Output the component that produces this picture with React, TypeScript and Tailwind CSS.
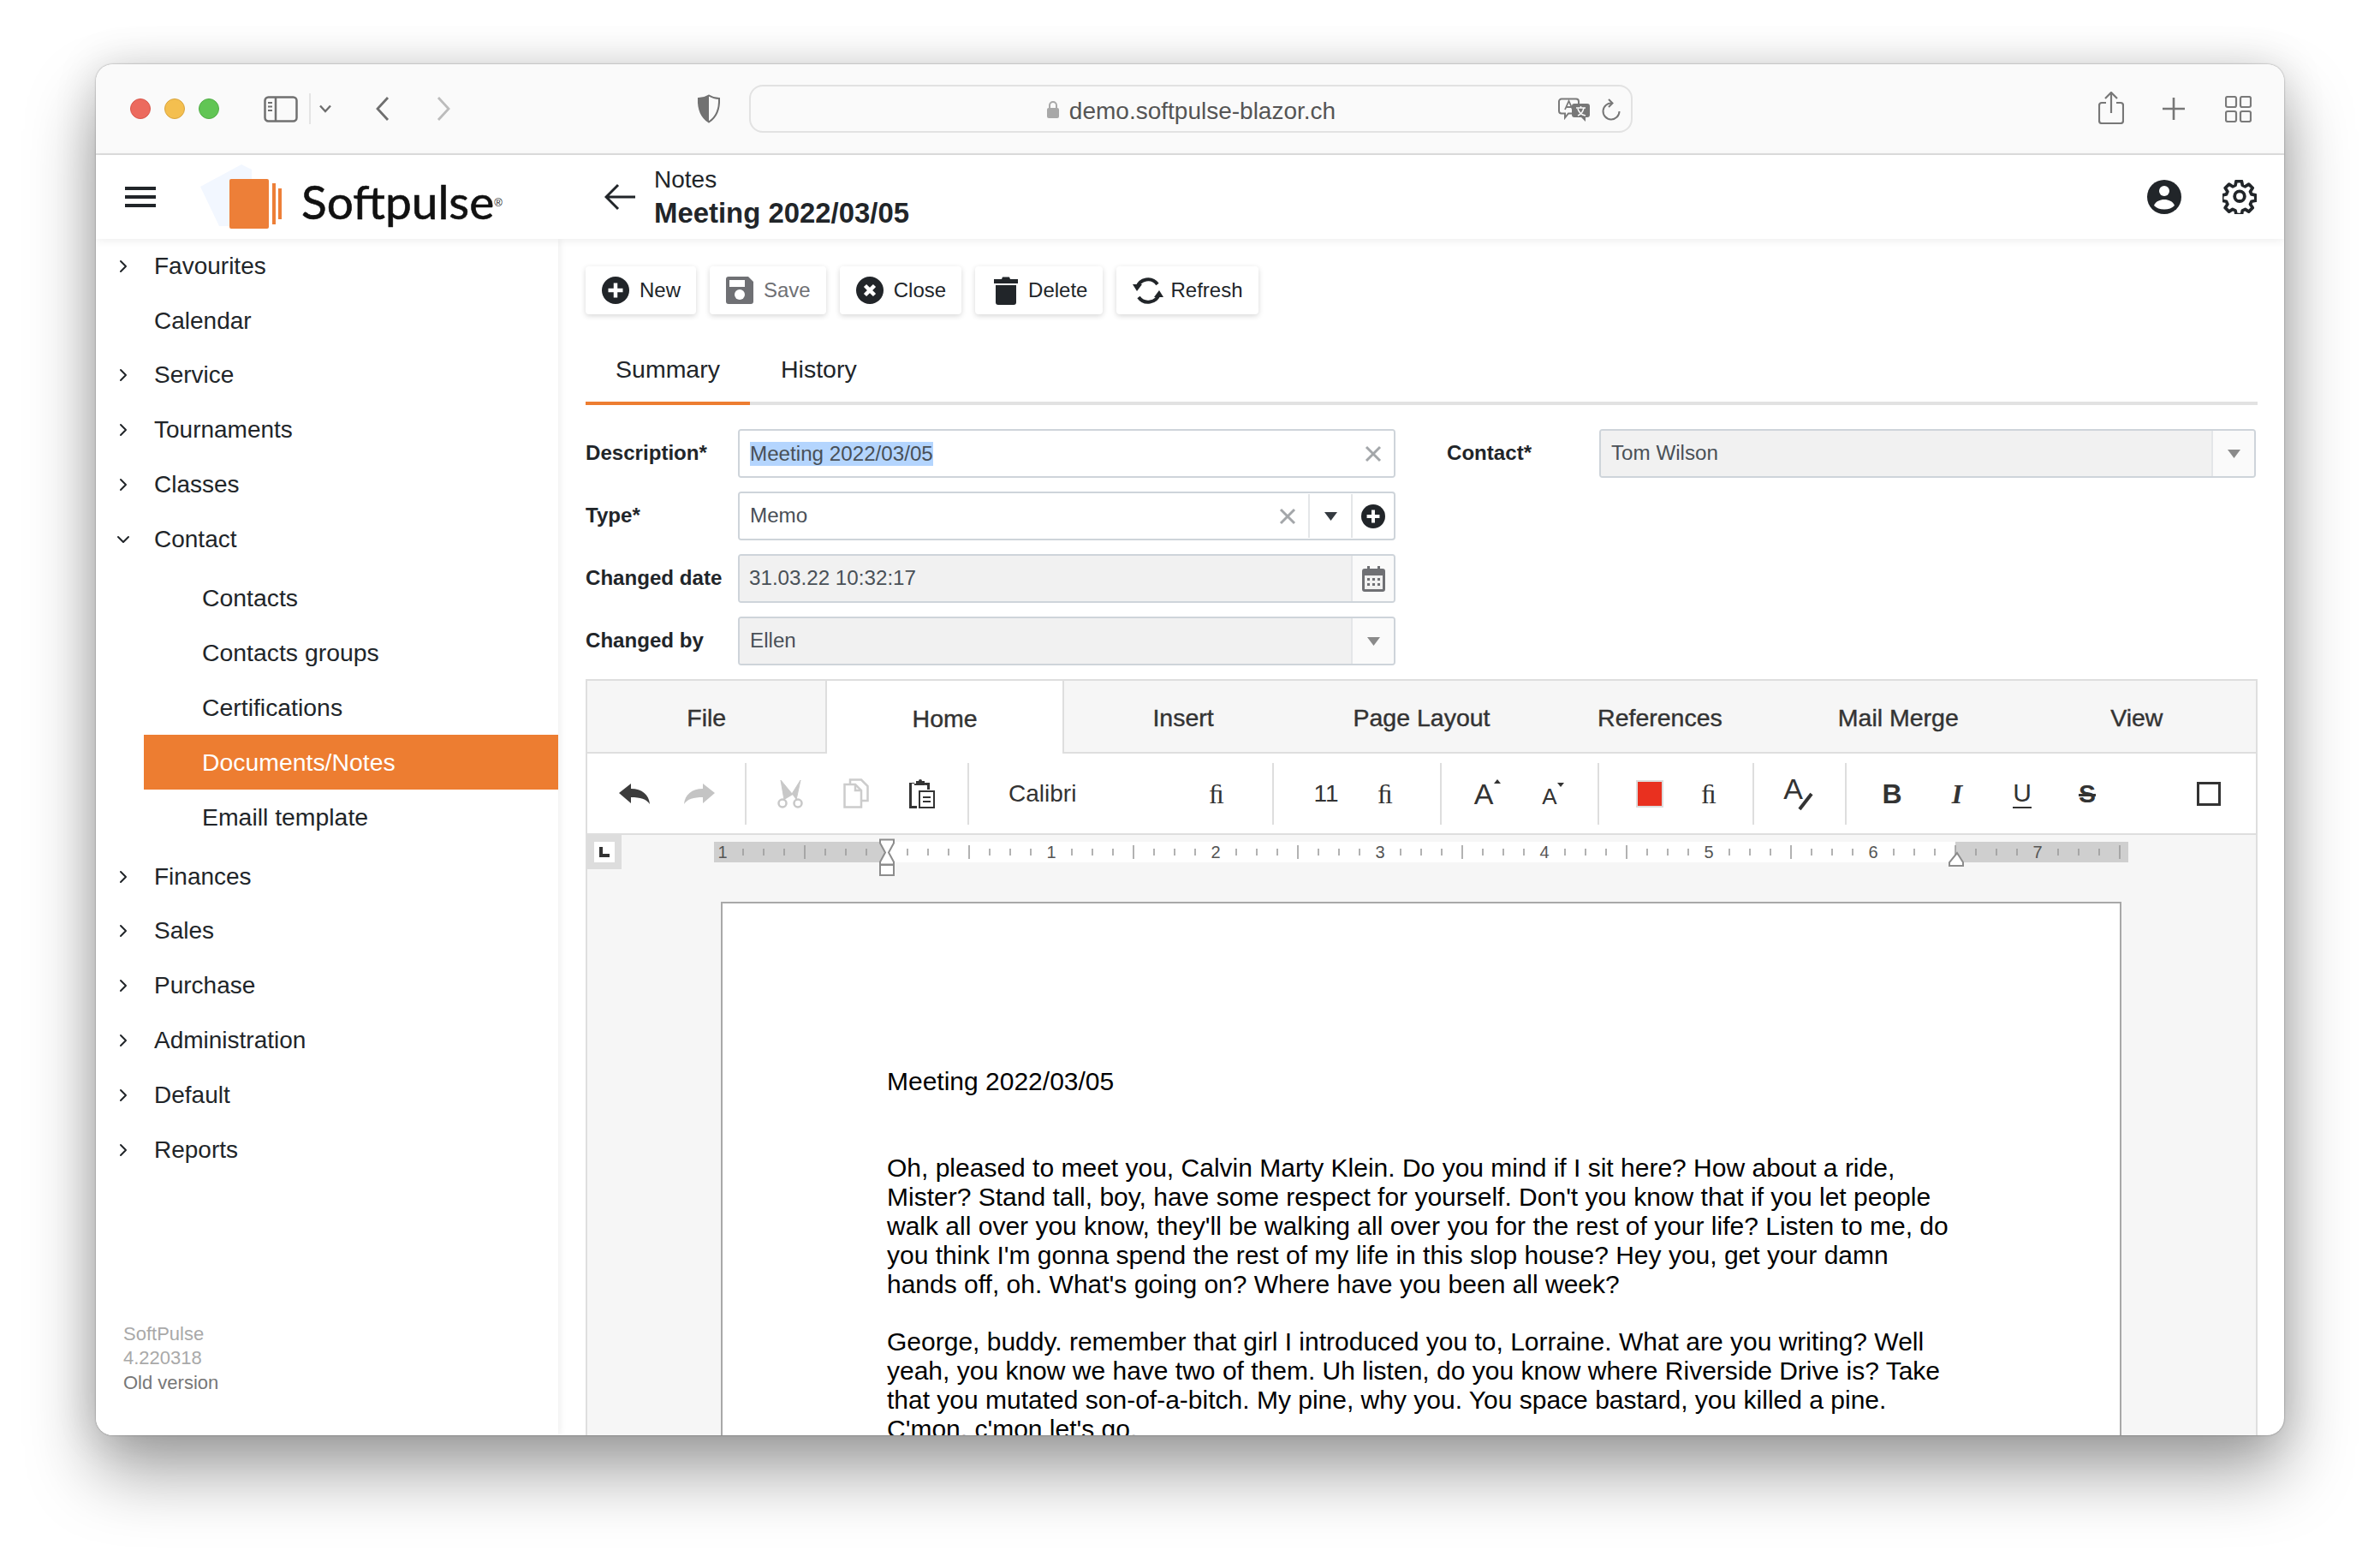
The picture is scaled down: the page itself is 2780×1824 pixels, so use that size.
import { ChevronDown, ChevronRight } from 'lucide-react'

const sans = "font-['Liberation_Sans',Arial,sans-serif]"

const navTop = [
  { label: 'Favourites', arrow: true },
  { label: 'Calendar', arrow: false },
  { label: 'Service', arrow: true },
  { label: 'Tournaments', arrow: true },
  { label: 'Classes', arrow: true },
]

const navSub = ['Contacts', 'Contacts groups', 'Certifications', 'Documents/Notes', 'Emaill template']

const navBottom = ['Finances', 'Sales', 'Purchase', 'Administration', 'Default', 'Reports']

const ribbonTabs = ['File', 'Home', 'Insert', 'Page Layout', 'References', 'Mail Merge', 'View']

const docFirst = [
  'Oh, pleased to meet you, Calvin Marty Klein. Do you mind if I sit here? How about a ride,',
  "Mister? Stand tall, boy, have some respect for yourself. Don't you know that if you let people",
  "walk all over you know, they'll be walking all over you for the rest of your life? Listen to me, do",
  "you think I'm gonna spend the rest of my life in this slop house? Hey you, get your damn",
  "hands off, oh. What's going on? Where have you been all week?",
]

const docSecond = [
  'George, buddy. remember that girl I introduced you to, Lorraine. What are you writing? Well',
  'yeah, you know we have two of them. Uh listen, do you know where Riverside Drive is? Take',
  'that you mutated son-of-a-bitch. My pine, why you. You space bastard, you killed a pine.',
  "C'mon, c'mon let's go.",
]

function SafariBar() {
  return (
    <div className="flex h-[106px] shrink-0 items-center border-b-2 border-[#dedede] bg-[#fafafa]">
      <div className="ml-[40px] flex gap-[16px]">
        <div className="h-[24px] w-[24px] rounded-full border border-[#d9574c] bg-[#ec6a5e]" />
        <div className="h-[24px] w-[24px] rounded-full border border-[#d9a53f] bg-[#f4bf4f]" />
        <div className="h-[24px] w-[24px] rounded-full border border-[#52ad47] bg-[#61c554]" />
      </div>
      <svg className="ml-[52px]" width="40" height="31" viewBox="0 0 40 31" fill="none" stroke="#707070" strokeWidth="2.5">
        <rect x="1.5" y="1.5" width="37" height="28" rx="4" />
        <path d="M14 2v27" />
        <path d="M5 8h5M5 12.5h5M5 17h5" strokeWidth="2" />
      </svg>
      <div className="ml-[13px] h-[36px] w-[2px] bg-[#e4e4e4]" />
      <svg className="ml-[10px]" width="14" height="10" viewBox="0 0 14 10" fill="none" stroke="#6e6e6e" strokeWidth="2.4">
        <path d="M1 1.5l6 6.5 6-6.5" />
      </svg>
      <svg className="ml-[52px]" width="16" height="30" viewBox="0 0 16 30" fill="none" stroke="#6e6e6e" strokeWidth="2.8">
        <path d="M14 2L2 15l12 13" />
      </svg>
      <svg className="ml-[55px]" width="16" height="30" viewBox="0 0 16 30" fill="none" stroke="#bcbcbc" strokeWidth="2.8">
        <path d="M2 2l12 13L2 28" />
      </svg>
      <svg className="ml-[288px]" width="28" height="34" viewBox="0 0 28 34">
        <path d="M14 1.5c4 2.5 8 3.5 12 3.5 .5 11-2 21-12 27.5C4 26 1.500 16 2 5c4 0 8-1 12-3.500z" fill="#fafafa" stroke="#727272" strokeWidth="2" />
        <path d="M14 1.500C10 4 6 5 2 5c-.5 11 2 21 12 27.500z" fill="#727272" />
      </svg>
      <div className="relative ml-[33px] flex h-[56px] w-[1032px] items-center justify-center rounded-[16px] border-2 border-[#e2e2e2] bg-[#fafafa]">
        <svg className="mr-[11px] mt-[2px]" width="16" height="22" viewBox="0 0 16 22">
          <path d="M4 10V6a4 4 0 018 0v4" fill="none" stroke="#a8a8a8" strokeWidth="2" />
          <rect x="1" y="9" width="14" height="12" rx="2" fill="#a8a8a8" />
        </svg>
        <span className={`${sans} mt-[5px] text-[28px] leading-none text-[#555555]`}>demo.softpulse-blazor.ch</span>
        <svg className="absolute left-[943px] top-[13px]" width="38" height="29" viewBox="0 0 38 29">
          <path d="M4 1.500h17a3 3 0 013 3v11a3 3 0 01-3 3H12l-4 5v-5H4a3 3 0 01-3-3v-11a3 3 0 013-3z" fill="#fafafa" stroke="#7a7a7a" strokeWidth="2" />
          <path d="M8 14l4.500-10L17 14M9.500 11h6" fill="none" stroke="#7a7a7a" strokeWidth="1.800" />
          <path d="M19 7h15a3 3 0 013 3v10a3 3 0 01-3 3h-2v5l-5-5h-8a3 3 0 01-3-3V10a3 3 0 013-3z" fill="#777777" />
          <path d="M21 12h11M26.500 10v2M23 21c4-1.500 6-4.500 7-9M23 13c1 4 4 7 9 8" fill="none" stroke="#fafafa" strokeWidth="1.500" />
        </svg>
        <svg className="absolute right-[11px] top-[14px]" width="24" height="26" viewBox="0 0 24 26" fill="none" stroke="#777777" strokeWidth="2">
          <path d="M13 5.500A9.500 9.500 0 1021.500 15" />
          <path d="M9 1l4.500 4.500L9 10" />
        </svg>
      </div>
      <svg className="-mt-[2px] ml-[544px]" width="30" height="38" viewBox="0 0 30 38" fill="none" stroke="#777777" strokeWidth="2.200">
        <path d="M9 13H4a3 3 0 00-3 3v18a3 3 0 003 3h22a3 3 0 003-3V16a3 3 0 00-3-3h-5" />
        <path d="M15 25V2M8 8l7-7 7 7" />
      </svg>
      <svg className="ml-[44px]" width="28" height="28" viewBox="0 0 28 28" stroke="#777777" strokeWidth="2.600">
        <path d="M14 1v26M1 14h26" />
      </svg>
      <svg className="ml-[46px]" width="31" height="31" viewBox="0 0 31 31" fill="none" stroke="#7a7a7a" strokeWidth="2.200">
        <rect x="1" y="1" width="12" height="12" rx="2" />
        <rect x="18" y="1" width="12" height="12" rx="2" />
        <rect x="1" y="18" width="12" height="12" rx="2" />
        <rect x="18" y="18" width="12" height="12" rx="2" />
      </svg>
    </div>
  )
}

function AppHeader() {
  return (
    <div className="relative z-10 flex h-[98px] shrink-0 items-center bg-white shadow-[0_2px_10px_rgba(0,0,0,0.07)]">
      <div className="ml-[34px] flex h-[24px] w-[36px] flex-col justify-between">
        <div className="h-[4px] bg-[#212529]" />
        <div className="h-[4px] bg-[#212529]" />
        <div className="h-[4px] bg-[#212529]" />
      </div>
      <svg className="ml-[52px]" width="100" height="80" viewBox="0 0 100 80">
        <path d="M0 28L48 2l12 6v66H22z" fill="#f2f7ff" />
        <rect x="34" y="19" width="46" height="58" rx="2" fill="#ed7f38" />
        <rect x="84" y="24" width="4" height="48" fill="#ed7f38" />
        <rect x="91" y="30" width="4" height="36" fill="#ed7f38" />
      </svg>
      <div className="ml-[18px] mt-[10px] flex w-[250px] items-start">
        <span className="font-['Lato',sans-serif] text-[55px] leading-none text-[#111111] [-webkit-text-stroke:0.6px_#111111]">Softpulse</span>
        <span className={`${sans} mt-[22px] text-[13px] leading-none text-[#222222]`}>®</span>
      </div>
      <svg className="ml-[104px]" width="36" height="32" viewBox="0 0 36 32" fill="none" stroke="#212529" strokeWidth="3">
        <path d="M36 16H3M16 2L2 16l14 14" />
      </svg>
      <div className={`${sans} ml-[22px] flex flex-col text-[#212529]`}>
        <span className="text-[28px] leading-[38px]">Notes</span>
        <span className="text-[32.900px] font-bold leading-[40px]">Meeting 2022/03/05</span>
      </div>
      <div className="ml-auto flex items-center">
        <svg width="40" height="40" viewBox="0 0 40 40">
          <circle cx="20" cy="20" r="20" fill="#212529" />
          <circle cx="20" cy="13" r="6" fill="white" />
          <path d="M8 30c2-5 7-7 12-7s10 2 12 7c-3 3-7 4.500-12 4.500S11 33 8 30z" fill="white" />
        </svg>
        <svg className="ml-[48px] mr-[32px]" width="40" height="40" viewBox="0 0 24 24" fill="none" stroke="#212529" strokeWidth="2.300" strokeLinejoin="round">
          <path d="M10 1.500h4l.6 3 2 .9 2.600-1.700 2.800 2.800-1.700 2.600.9 2 3 .6v4l-3 .6-.9 2 1.700 2.600-2.800 2.800-2.600-1.700-2 .9-.6 3h-4l-.6-3-2-.9-2.600 1.700-2.800-2.800 1.700-2.600-.9-2-3-.6v-4l3-.6.9-2-1.700-2.600 2.800-2.800 2.600 1.700 2-.9z" transform="translate(0 -.5) scale(.96)" />
          <circle cx="12" cy="11.500" r="3.500" />
        </svg>
      </div>
    </div>
  )
}

function NavRow({ label, arrow, open }: { label: string; arrow?: boolean; open?: boolean }) {
  return (
    <div className="flex h-[63.8px] items-center text-[28px] text-[#212529]">
      <div className="flex w-[68px] justify-end pr-[24px]">
        {arrow && (open ? <ChevronDown size={24} strokeWidth={2} /> : <ChevronRight size={24} strokeWidth={2} />)}
      </div>
      <span>{label}</span>
    </div>
  )
}

function Sidebar() {
  return (
    <div className={`${sans} relative flex w-[540px] shrink-0 flex-col bg-white shadow-[2px_0_8px_rgba(0,0,0,0.07)]`}>
      {navTop.map((item) => (
        <NavRow key={item.label} label={item.label} arrow={item.arrow} />
      ))}
      <NavRow label="Contact" arrow open />
      <div className="mb-[6px] mt-[5px]">
        {navSub.map((label) => (
          <div
            key={label}
            className={
              label === 'Documents/Notes'
                ? 'ml-[56px] flex h-[63.8px] items-center bg-[#ed7d31] pl-[68px] text-[28.400px] text-white'
                : 'ml-[56px] flex h-[63.8px] items-center pl-[68px] text-[28.400px] text-[#212529]'
            }
          >
            {label}
          </div>
        ))}
      </div>
      {navBottom.map((label) => (
        <NavRow key={label} label={label} arrow />
      ))}
      <div className="absolute bottom-[47px] left-[32px] text-[22px] leading-[28.500px]">
        <div className="text-[#a9a9a9]">SoftPulse</div>
        <div className="text-[#a9a9a9]">4.220318</div>
        <div className="text-[#777777]">Old version</div>
      </div>
    </div>
  )
}

function ActionButton({ label, icon, muted }: { label: string; icon: React.ReactNode; muted?: boolean }) {
  return (
    <div
      className={
        muted
          ? 'flex h-[56px] items-center gap-[12px] rounded-[4px] bg-white pl-[19px] pr-[18px] text-[24px] text-[#6f7074] shadow-[0_2px_6px_rgba(0,0,0,0.16)]'
          : 'flex h-[56px] items-center gap-[12px] rounded-[4px] bg-white pl-[19px] pr-[18px] text-[24px] text-[#212529] shadow-[0_2px_6px_rgba(0,0,0,0.16)]'
      }
    >
      {icon}
      <span>{label}</span>
    </div>
  )
}

function CircleIcon({ x }: { x?: boolean }) {
  return (
    <svg width="32" height="32" viewBox="0 0 32 32">
      <circle cx="16" cy="16" r="16" fill="#212529" />
      {x ? (
        <path d="M10.500 10.500l11 11M21.500 10.500l-11 11" stroke="white" strokeWidth="4.500" />
      ) : (
        <path d="M16 7.500v17M7.500 16h17" stroke="white" strokeWidth="4.500" />
      )}
    </svg>
  )
}

function ActionBar() {
  return (
    <div className="flex gap-[16px]">
      <ActionButton label="New" icon={<CircleIcon />} />
      <ActionButton
        label="Save"
        muted
        icon={
          <svg width="32" height="32" viewBox="0 0 32 32">
            <path d="M3 0h23l6 6v23a3 3 0 01-3 3H3a3 3 0 01-3-3V3a3 3 0 013-3z" fill="#6f7074" />
            <rect x="4" y="4" width="18" height="8" fill="white" />
            <circle cx="16" cy="21" r="6" fill="white" />
          </svg>
        }
      />
      <ActionButton label="Close" icon={<CircleIcon x />} />
      <ActionButton
        label="Delete"
        icon={
          <svg className="ml-[3px]" width="28" height="33" viewBox="0 0 28 33">
            <path d="M0 3h9l1-2.500h8L19 3h9v5H0z" fill="#212529" />
            <path d="M2 10h24v20a3 3 0 01-3 3H5a3 3 0 01-3-3z" fill="#212529" />
          </svg>
        }
      />
      <ActionButton
        label="Refresh"
        icon={
          <svg className="-mr-[4px]" width="36" height="33" viewBox="0 0 36 33" fill="none">
            <path d="M5 13A13.500 13.500 0 0129 9" stroke="#212529" strokeWidth="4" />
            <path d="M31 20A13.500 13.500 0 017 24" stroke="#212529" strokeWidth="4" />
            <path d="M0 9h11l-6 8zM36 24H25l6-8z" fill="#212529" />
          </svg>
        }
      />
    </div>
  )
}

function FieldRow({ label, children }: { label: string; children: React.ReactNode }) {
  return (
    <div className="flex h-[57px] items-center">
      <div className="w-[178px] text-[24.100px] font-bold text-[#212529]">{label}</div>
      <div className="flex h-[57px] flex-1 items-stretch overflow-hidden rounded-[4px] border-2 border-[#ced4da] text-[24.200px] text-[#495057]">
        {children}
      </div>
    </div>
  )
}

function Caret({ color }: { color: string }) {
  return (
    <svg width="15" height="10" viewBox="0 0 15 10">
      <path d="M0 0h15L7.500 10z" fill={color} />
    </svg>
  )
}

function ClearX() {
  return (
    <svg width="20" height="20" viewBox="0 0 20 20" stroke="#a3a6a9" strokeWidth="3">
      <path d="M2 2l16 16M18 2L2 18" />
    </svg>
  )
}

function Form() {
  return (
    <div className="mt-[28px] flex">
      <div className="flex w-[946px] flex-col gap-[16px]">
        <FieldRow label="Description*">
          <div className="flex flex-1 items-center bg-white pl-[12px] pr-[14px]">
            <span className="bg-[#b4d5fe] leading-[28px]">Meeting 2022/03/05</span>
            <div className="ml-auto"><ClearX /></div>
          </div>
        </FieldRow>
        <FieldRow label="Type*">
          <div className="flex flex-1 items-center bg-white pl-[12px] pr-[14px]">
            <span>Memo</span>
            <div className="ml-auto"><ClearX /></div>
          </div>
          <div className="my-[1px] flex w-[50px] items-center justify-center border-l-2 border-[#e4e6e8] bg-white">
            <Caret color="#343a40" />
          </div>
          <div className="my-[1px] flex w-[50px] items-center justify-center border-l-2 border-[#e4e6e8] bg-white">
            <svg width="28" height="28" viewBox="0 0 32 32">
              <circle cx="16" cy="16" r="16" fill="#212529" />
              <path d="M16 7.500v17M7.500 16h17" stroke="white" strokeWidth="4.500" />
            </svg>
          </div>
        </FieldRow>
        <FieldRow label="Changed date">
          <div className="flex flex-1 items-center bg-[#f1f1f1] pl-[11px]">31.03.22 10:32:17</div>
          <div className="flex w-[50px] items-center justify-center border-l-2 border-[#e4e6e8] bg-[#fafafa]">
            <svg width="27" height="30" viewBox="0 0 27 30">
              <path d="M3 3h3V0h3v3h9V0h3v3h3a3 3 0 013 3v21a3 3 0 01-3 3H3a3 3 0 01-3-3V6a3 3 0 013-3z" fill="#6f7074" />
              <rect x="3" y="11" width="21" height="16" fill="#f1f1f1" />
              <path d="M6 14h3v3H6zM12 14h3v3h-3zM18 14h3v3h-3zM6 20h3v3H6zM12 20h3v3h-3zM18 20h3v3h-3z" fill="#6f7074" />
            </svg>
          </div>
        </FieldRow>
        <FieldRow label="Changed by">
          <div className="flex flex-1 items-center bg-[#f1f1f1] pl-[12px]">Ellen</div>
          <div className="flex w-[50px] items-center justify-center border-l-2 border-[#e4e6e8] bg-[#fafafa]">
            <Caret color="#8a8a8a" />
          </div>
        </FieldRow>
      </div>
      <div className="ml-[60px] w-[945px]">
        <FieldRow label="Contact*">
          <div className="flex flex-1 items-center bg-[#f1f1f1] pl-[12px]">Tom Wilson</div>
          <div className="flex w-[50px] items-center justify-center border-l-2 border-[#e4e6e8] bg-[#fafafa]">
            <Caret color="#8a8a8a" />
          </div>
        </FieldRow>
      </div>
    </div>
  )
}

function Divider({ className }: { className: string }) {
  return <div className={`h-[72px] w-[2px] shrink-0 bg-[#dedede] ${className}`} />
}

function Cell({ width, className, children }: { width: string; className?: string; children: React.ReactNode }) {
  return <div className={`flex shrink-0 items-center justify-center ${width} ${className ?? ''}`}>{children}</div>
}

function Ligature() {
  return <span className="font-['Liberation_Serif',serif] text-[32px] leading-none text-[#333333]">ﬁ</span>
}

function RibbonToolbar() {
  return (
    <div className="flex h-[95px] shrink-0 items-center border-b-2 border-[#dedede] bg-white text-[#333333]">
      <Cell width="w-[76px]" className="ml-[17px]">
        <svg width="36" height="24" viewBox="0 0 36 24"><path d="M0 11L14 0v6c13 0 21 7 22 18-4-6-11-8-22-8v7z" fill="#3c3c3c" /></svg>
      </Cell>
      <Cell width="w-[76px]">
        <svg width="36" height="24" viewBox="0 0 36 24"><path d="M36 11L22 0v6C9 6 1 13 0 24c4-6 11-8 22-8v7z" fill="#c4c4c4" /></svg>
      </Cell>
      <Divider className="ml-[15px]" />
      <Cell width="w-[77px]" className="ml-[12px]">
        <svg width="30" height="34" viewBox="0 0 30 34" fill="none" stroke="#c8c8c8" strokeWidth="2.500">
          <circle cx="6" cy="28" r="4.500" />
          <circle cx="24" cy="28" r="4.500" />
          <path d="M8 24L4 1l14 17M22 24L27 1 17 17" fill="#c8c8c8" strokeWidth="1" />
        </svg>
      </Cell>
      <Cell width="w-[77px]">
        <svg width="30" height="35" viewBox="0 0 30 35" fill="none" stroke="#cccccc" strokeWidth="2.500">
          <path d="M8 6V1.500h13L28.500 9v17H22" />
          <path d="M1.500 7H14l7 7v19.500H1.500z" />
          <path d="M14 7v7h7" />
        </svg>
      </Cell>
      <Cell width="w-[77px]">
        <svg width="30" height="35" viewBox="0 0 30 35">
          <path d="M0 5h6v3h12V5h6v8h-3V8h-1M0 5h3v27h6v3H0z" fill="#333333" />
          <path d="M8 3h3a2 2 0 014 0h3v5H8z" fill="#333333" />
          <rect x="12" y="15" width="17" height="19" fill="white" stroke="#333333" strokeWidth="2" />
          <path d="M16 22h9M16 27h9" stroke="#333333" strokeWidth="2" />
        </svg>
      </Cell>
      <Divider className="ml-[15px]" />
      <div className="ml-[46px] w-[225px] shrink-0 text-[28px]">Calibri</div>
      <Cell width="w-[36px]"><Ligature /></Cell>
      <Divider className="ml-[47px]" />
      <Cell width="w-[60px]" className="ml-[31px] text-[28px]">11</Cell>
      <Cell width="w-[36px]" className="ml-[21px]"><Ligature /></Cell>
      <Divider className="ml-[46px]" />
      <Cell width="w-[76px]" className="ml-[11px]">
        <span className="relative text-[34px] leading-none">
          A
          <span className="absolute -right-[9px] top-[0px] h-0 w-0 border-x-[4px] border-b-[5px] border-x-transparent border-b-[#333333]" />
        </span>
      </Cell>
      <Cell width="w-[76px]" className="ml-[1px]">
        <span className="relative mt-[6px] text-[26px] leading-none">
          A
          <span className="absolute -right-[8px] -top-[3px] h-0 w-0 border-x-[4px] border-t-[5px] border-x-transparent border-t-[#333333]" />
        </span>
      </Cell>
      <Divider className="ml-[18px]" />
      <div className="ml-[43px] h-[32px] w-[32px] shrink-0 border-2 border-[#dddddd] bg-[#e9301f]" />
      <Cell width="w-[36px]" className="ml-[35px]"><Ligature /></Cell>
      <Divider className="ml-[33px]" />
      <Cell width="w-[76px]" className="ml-[14px]">
        <span className="relative mr-[13px] -translate-y-[6px] text-[34px] leading-none">
          A
          <svg className="absolute -right-[12px] top-[21px]" width="20" height="22" viewBox="0 0 20 22">
            <path d="M18 2L4 20" stroke="#333333" strokeWidth="4" />
          </svg>
        </span>
      </Cell>
      <Divider className="ml-[16px]" />
      <Cell width="w-[76px]" className="ml-[15px] text-[32px] font-bold">B</Cell>
      <Cell width="w-[76px]" className="font-['Liberation_Serif',serif] text-[32px] font-bold italic">I</Cell>
      <Cell width="w-[76px]" className="text-[30px]">
        <span className="border-b-2 border-[#333333] leading-[32px]">U</span>
      </Cell>
      <Cell width="w-[76px]" className="text-[30px] font-bold line-through">S</Cell>
      <div className="ml-[90px] h-[28px] w-[28px] shrink-0 border-[3px] border-[#333333]" />
    </div>
  )
}

function Ruler() {
  const ticks = []
  for (let k = -7; k <= 60; k++) {
    if (k === 0) continue
    const x = 202 + k * 24
    if (k % 8 === 0) {
      ticks.push(
        <text key={k} x={x} y={27} textAnchor="middle" fontSize="20" fill="#555555" fontFamily="Liberation Sans">
          {Math.abs(k) / 8}
        </text>,
      )
    } else if (k % 4 === 0) {
      ticks.push(<path key={k} d={`M${x} 12v16`} stroke="#999999" strokeWidth="1.500" />)
    } else {
      ticks.push(<path key={k} d={`M${x} 16v8`} stroke="#999999" strokeWidth="1.500" />)
    }
  }
  return (
    <svg className="ml-[108px]" width="1660" height="52" viewBox="0 0 1660 52">
      <rect x="0" y="8" width="1652" height="24" fill="white" />
      <rect x="0" y="8" width="201" height="24" fill="#cfcfcf" />
      <rect x="1450" y="8" width="202" height="24" fill="#cfcfcf" />
      <text x="10" y="27" textAnchor="middle" fontSize="20" fill="#555555" fontFamily="Liberation Sans">1</text>
      {ticks}
      <path d="M194 5.500h16v4l-6 11 6 11v3h-16v-3l6-11-6-11z" fill="white" stroke="#8c8c8c" strokeWidth="2" />
      <rect x="194" y="35" width="16" height="12" fill="white" stroke="#8c8c8c" strokeWidth="2" />
      <path d="M1452 21l7 11v4h-16v-4z" fill="white" stroke="#8c8c8c" strokeWidth="2" />
    </svg>
  )
}

function Editor() {
  return (
    <div className="mt-[16px] flex min-h-0 flex-1 flex-col overflow-hidden border-x-2 border-t-2 border-[#dedede] bg-[#f6f6f6]">
      <div className="grid h-[85px] shrink-0 grid-cols-7 text-[28.500px] text-[#333333] [-webkit-text-stroke:0.4px_#333333]">
        {ribbonTabs.map((tab) => (
          <div
            key={tab}
            className={
              tab === 'Home'
                ? 'flex items-center justify-center border-x-2 border-[#dedede] bg-white pt-[3px]'
                : 'flex items-center justify-center border-b-2 border-[#dedede] pt-[3px]'
            }
          >
            {tab}
          </div>
        ))}
      </div>
      <RibbonToolbar />
      <div className="flex h-[78px] shrink-0 items-start">
        <div className="flex h-[40px] w-[40px] shrink-0 items-center justify-center bg-[#dddddd]">
          <div className="flex h-[24px] w-[24px] items-center justify-center bg-white">
            <svg width="12" height="12" viewBox="0 0 12 12"><path d="M0 0h4v8h8v4H0z" fill="#333333" /></svg>
          </div>
        </div>
        <Ruler />
      </div>
      <div className="ml-[156px] w-[1636px] flex-1 border-x-2 border-t-2 border-[#a8a8a8] bg-white pl-[192px] pt-[191px] font-['Liberation_Sans',Arial,sans-serif] text-[30px] leading-[34.100px] text-black">
        <div className="whitespace-nowrap">Meeting 2022/03/05</div>
        <div className="mt-[67px]">
          {docFirst.map((line) => (
            <div key={line} className="whitespace-nowrap">{line}</div>
          ))}
        </div>
        <div className="mt-[32.500px]">
          {docSecond.map((line) => (
            <div key={line} className="whitespace-nowrap">{line}</div>
          ))}
        </div>
      </div>
    </div>
  )
}

export default function App() {
  return (
    <div className="h-[1824px] w-[2780px] overflow-hidden bg-white pl-[112px] pt-[75px]">
      <div className="flex h-[1601px] w-[2556px] flex-col overflow-hidden rounded-[20px] bg-white shadow-[0_44px_80px_rgba(0,0,0,0.36),0_0_2px_rgba(0,0,0,0.45),0_0_50px_rgba(0,0,0,0.14)]">
        <SafariBar />
        <AppHeader />
        <div className="flex min-h-0 flex-1">
          <Sidebar />
          <div className={`${sans} flex min-w-0 flex-1 flex-col pl-[32px] pr-[31px] pt-[32px]`}>
            <ActionBar />
            <div className="mt-[26px] flex h-[80px] shrink-0 border-b-4 border-[#e2e2e2] text-[28.500px] text-[#212529]">
              <div className="-mb-[4px] flex w-[192px] items-center justify-center border-b-4 border-[#ed7d31]">Summary</div>
              <div className="flex items-center px-[36px]">History</div>
            </div>
            <Form />
            <Editor />
          </div>
        </div>
      </div>
    </div>
  )
}
